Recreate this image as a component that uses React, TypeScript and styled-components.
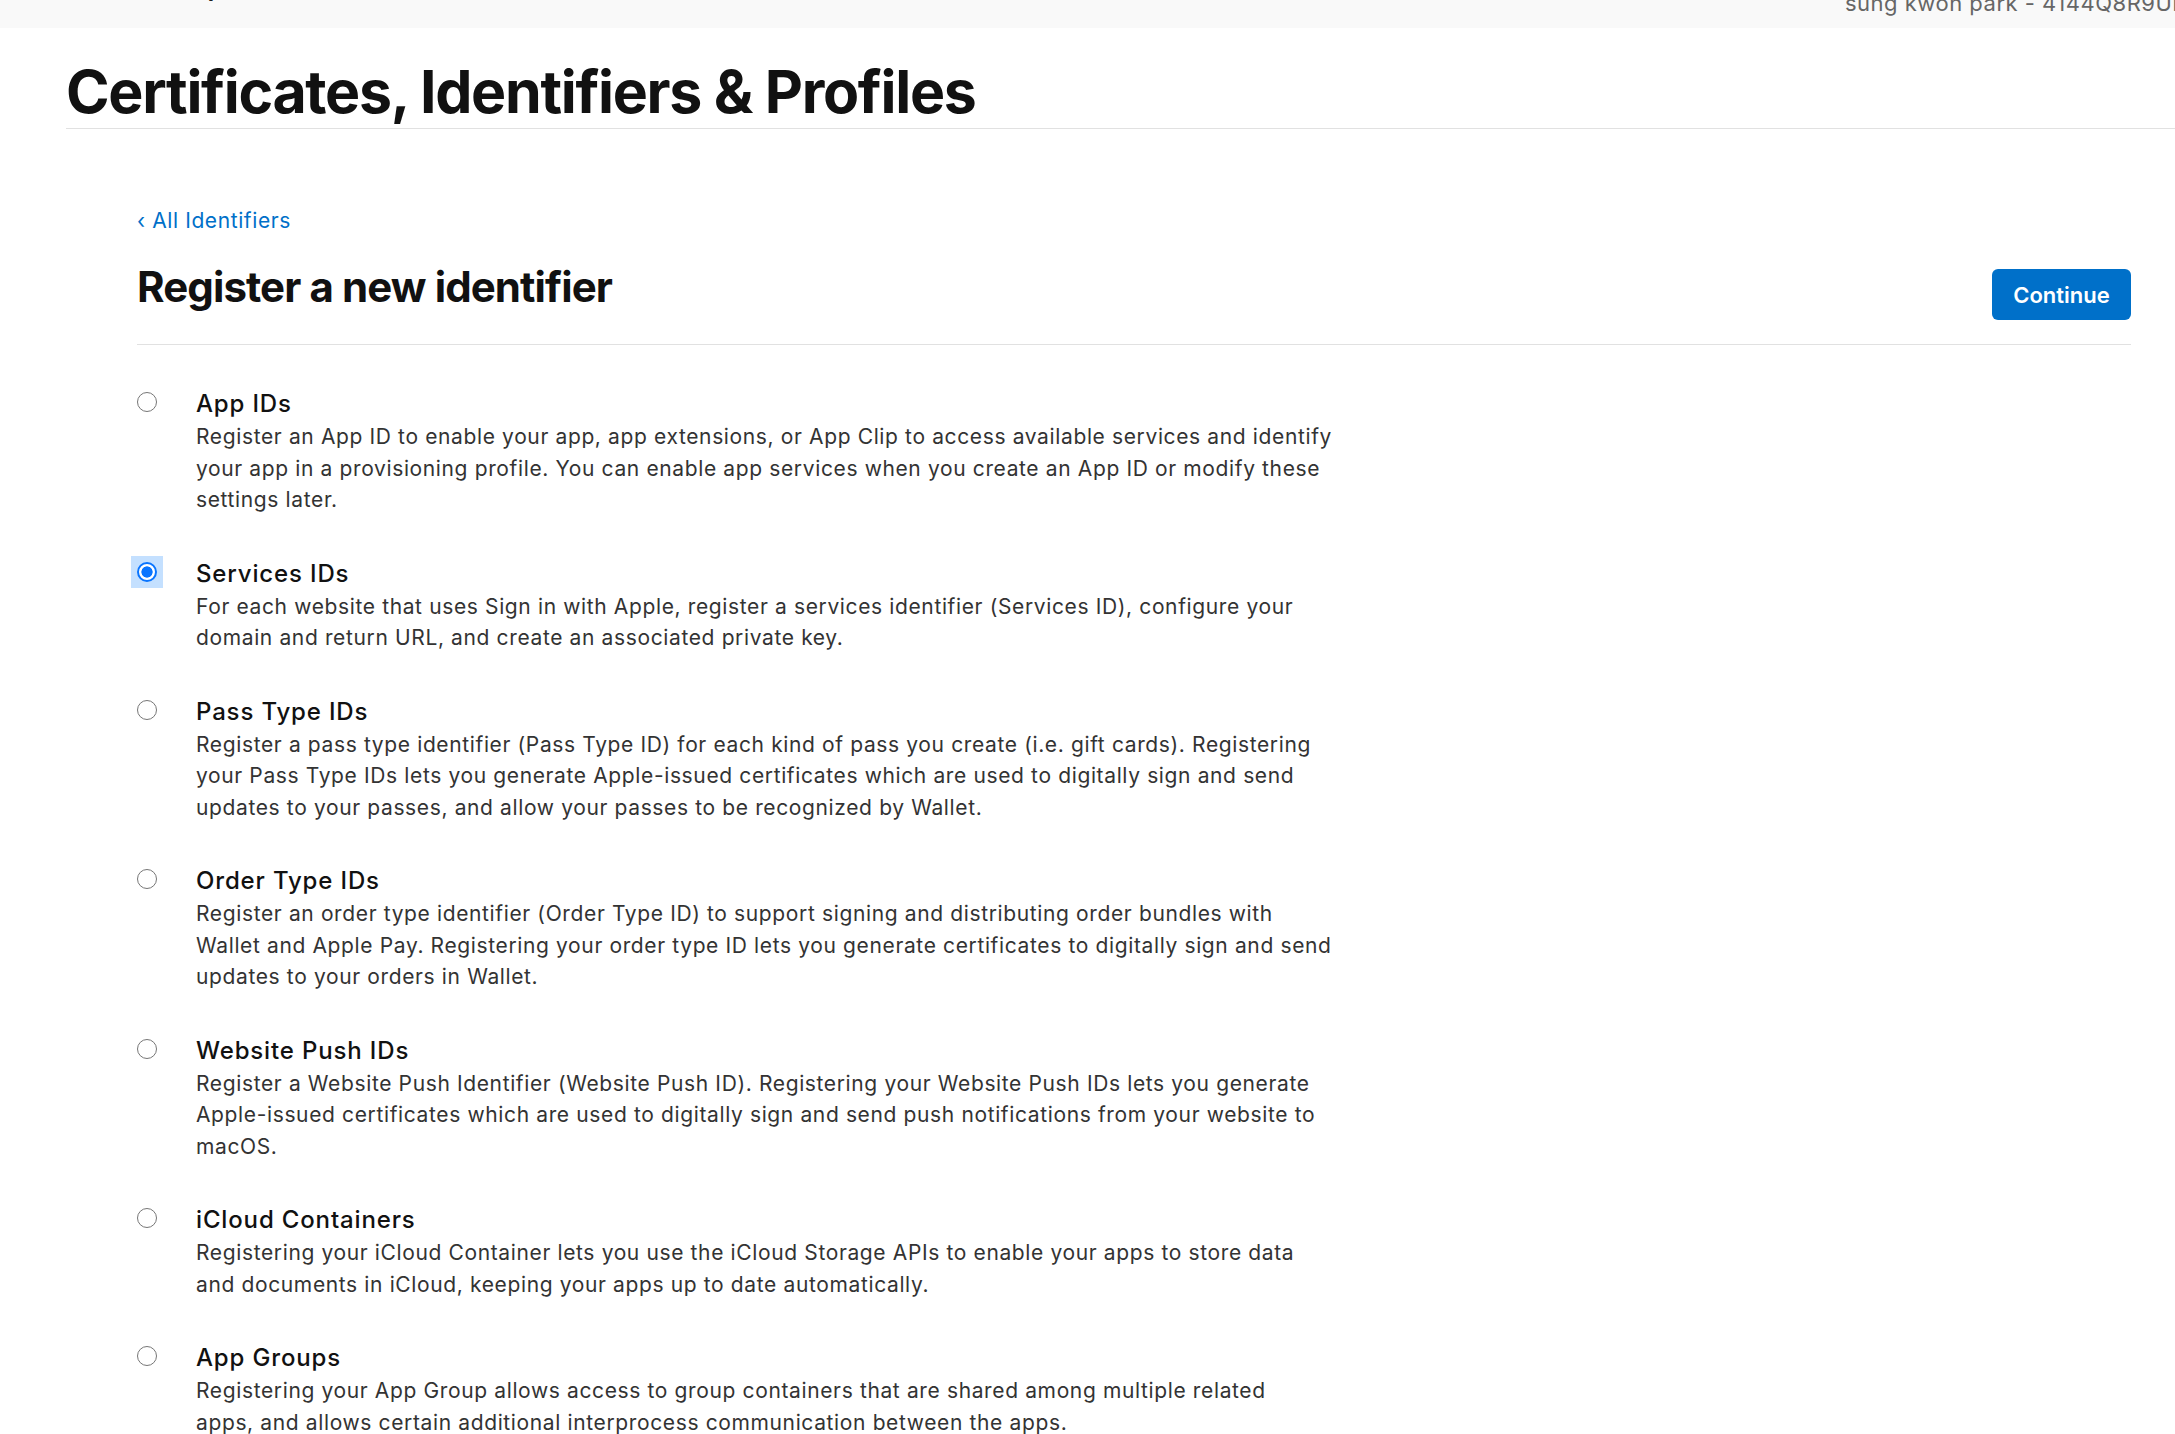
import React from "react";
import styled, { createGlobalStyle } from "styled-components";

const GlobalStyle = createGlobalStyle`
  html, body {
    margin: 0;
    padding: 0;
    background: #ffffff;
    overflow-x: hidden;
  }
  body {
    font-family: Inter, "Noto Sans", "Liberation Sans", sans-serif;
    color: #1d1d1f;
  }
  * { box-sizing: border-box; }
`;

const TopBar = styled.header`
  display: grid;
  grid-template-columns: 1845px 1fr;
  height: 28px;
  background: #f9f9f9;
  overflow: hidden;
`;

const Brand = styled.div`
  padding-left: 121px;
  margin-top: -26px;
  font-size: 26px;
  line-height: 26px;
  font-weight: 600;
  color: #1d1d1f;
  white-space: nowrap;
`;

const UserName = styled.div`
  margin-top: -8px;
  font-size: 22px;
  line-height: 22px;
  letter-spacing: 0.5px;
  color: #666666;
  white-space: nowrap;
`;

const PageHeader = styled.div`
  margin-left: 66px;
  padding: 31px 0 4px;
  border-bottom: 1px solid #e1e1e1;
`;

const PageTitle = styled.h1`
  margin: 0;
  font-size: 59px;
  line-height: 65px;
  font-weight: 700;
  letter-spacing: -1.3px;
  color: #111111;
`;

const Main = styled.main`
  padding: 0 44px 0 137px;
`;

const BackLink = styled.a`
  display: inline-block;
  margin-top: 75.5px;
  font-size: 21px;
  line-height: 31.5px;
  color: #0070c9;
  text-decoration: none;
  letter-spacing: 0.6px;
`;

const HeaderRow = styled.div`
  display: flex;
  justify-content: space-between;
  align-items: flex-start;
  margin-top: 25.5px;
  padding-bottom: 24px;
  border-bottom: 1px solid #e1e1e1;
`;

const SectionTitle = styled.h2`
  margin: 0;
  font-size: 42px;
  line-height: 50px;
  font-weight: 700;
  letter-spacing: -0.9px;
  color: #111111;
`;

const ContinueButton = styled.button`
  margin-top: 7.5px;
  width: 139px;
  height: 51px;
  border: none;
  border-radius: 6px;
  background: #0070c9;
  color: #ffffff;
  font-family: inherit;
  font-size: 22px;
  font-weight: 600;
  letter-spacing: 0px;
  cursor: pointer;
`;

const OptionList = styled.div`
  display: flex;
  flex-direction: column;
  padding-top: 42.3px;
`;

const Option = styled.label`
  display: grid;
  grid-template-columns: 20px 1fr;
  column-gap: 39px;
  margin-bottom: 41px;
  cursor: pointer;
`;

const RadioFocus = styled.span<{ $focused: boolean }>`
  display: grid;
  place-items: center;
  width: 32px;
  height: 32px;
  margin: -1.3px -6px 0 -6.5px;
  background: ${(p) => (p.$focused ? "#c4e0ff" : "transparent")};
`;

const Radio = styled.span<{ $checked: boolean }>`
  width: 20px;
  height: 20px;
  border-radius: 50%;
  border: ${(p) => (p.$checked ? "2px solid #0a75ff" : "1.6px solid #767676")};
  background: ${(p) =>
    p.$checked
      ? "radial-gradient(circle, #0a75ff 0 5.3px, #ffffff 5.9px)"
      : "#ffffff"};
`;

const OptionBody = styled.div`
  display: flex;
  flex-direction: column;
`;

const OptionTitle = styled.div`
  font-size: 24px;
  line-height: 34px;
  font-weight: 500;
  letter-spacing: 0.85px;
  color: #111111;
`;

const Description = styled.p`
  margin: 0;
  font-size: 21px;
  line-height: 31.5px;
  letter-spacing: 0.63px;
  color: #333333;
`;

const Line = styled.span`
  display: block;
  white-space: nowrap;
`;

type Item = { title: string; lines: string[] };

const items: Item[] = [
  {
    title: "App IDs",
    lines: [
      "Register an App ID to enable your app, app extensions, or App Clip to access available services and identify",
      "your app in a provisioning profile. You can enable app services when you create an App ID or modify these",
      "settings later.",
    ],
  },
  {
    title: "Services IDs",
    lines: [
      "For each website that uses Sign in with Apple, register a services identifier (Services ID), configure your",
      "domain and return URL, and create an associated private key.",
    ],
  },
  {
    title: "Pass Type IDs",
    lines: [
      "Register a pass type identifier (Pass Type ID) for each kind of pass you create (i.e. gift cards). Registering",
      "your Pass Type IDs lets you generate Apple-issued certificates which are used to digitally sign and send",
      "updates to your passes, and allow your passes to be recognized by Wallet.",
    ],
  },
  {
    title: "Order Type IDs",
    lines: [
      "Register an order type identifier (Order Type ID) to support signing and distributing order bundles with",
      "Wallet and Apple Pay. Registering your order type ID lets you generate certificates to digitally sign and send",
      "updates to your orders in Wallet.",
    ],
  },
  {
    title: "Website Push IDs",
    lines: [
      "Register a Website Push Identifier (Website Push ID). Registering your Website Push IDs lets you generate",
      "Apple-issued certificates which are used to digitally sign and send push notifications from your website to",
      "macOS.",
    ],
  },
  {
    title: "iCloud Containers",
    lines: [
      "Registering your iCloud Container lets you use the iCloud Storage APIs to enable your apps to store data",
      "and documents in iCloud, keeping your apps up to date automatically.",
    ],
  },
  {
    title: "App Groups",
    lines: [
      "Registering your App Group allows access to group containers that are shared among multiple related",
      "apps, and allows certain additional interprocess communication between the apps.",
    ],
  },
  {
    title: "Merchant IDs",
    lines: [
      "Register a merchant identifier to enable your app to process Apple Pay payments.",
    ],
  },
];

export default function App() {
  const [selected, setSelected] = React.useState(1);
  return (
    <>
      <GlobalStyle />
      <TopBar>
        <Brand>Developer</Brand>
        <UserName>sung kwon park - 4144Q8R9UF</UserName>
      </TopBar>
      <PageHeader>
        <PageTitle>Certificates, Identifiers &amp; Profiles</PageTitle>
      </PageHeader>
      <Main>
        <BackLink href="#">‹ All Identifiers</BackLink>
        <HeaderRow>
          <SectionTitle>Register a new identifier</SectionTitle>
          <ContinueButton type="button">Continue</ContinueButton>
        </HeaderRow>
        <OptionList>
          {items.map((item, i) => (
            <Option key={item.title} onClick={() => setSelected(i)}>
              <RadioFocus $focused={selected === i}>
                <Radio $checked={selected === i} />
              </RadioFocus>
              <OptionBody>
                <OptionTitle>{item.title}</OptionTitle>
                <Description>
                  {item.lines.map((l) => (
                    <Line key={l}>{l}</Line>
                  ))}
                </Description>
              </OptionBody>
            </Option>
          ))}
        </OptionList>
      </Main>
    </>
  );
}
